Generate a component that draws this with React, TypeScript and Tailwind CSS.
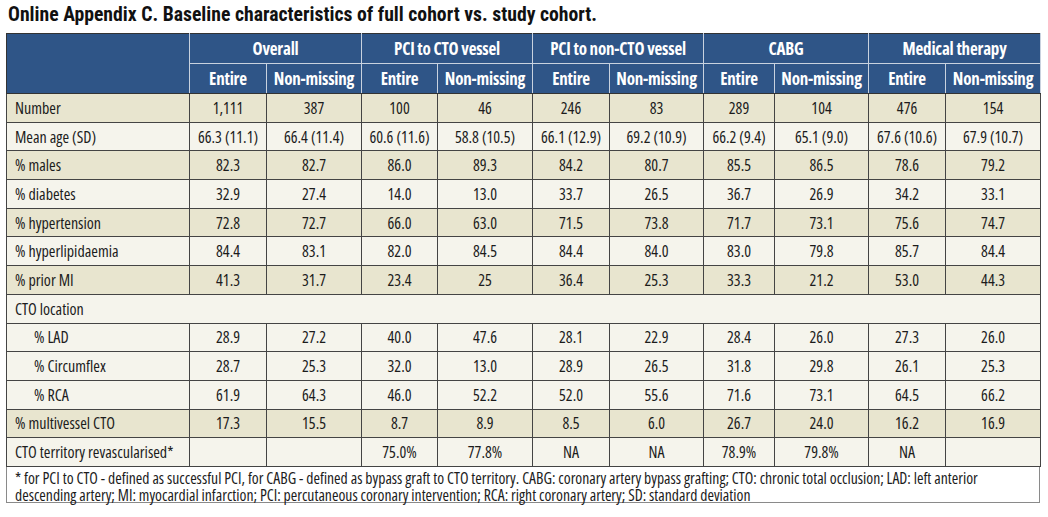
import React from "react";

type Row = { label: string; values: string[]; band: boolean; indent?: boolean; span?: boolean };

const rows: Row[] = [
  { label: "Number", values: ["1,111", "387", "100", "46", "246", "83", "289", "104", "476", "154"], band: true },
  { label: "Mean age (SD)", values: ["66.3 (11.1)", "66.4 (11.4)", "60.6 (11.6)", "58.8 (10.5)", "66.1 (12.9)", "69.2 (10.9)", "66.2 (9.4)", "65.1 (9.0)", "67.6 (10.6)", "67.9 (10.7)"], band: false },
  { label: "% males", values: ["82.3", "82.7", "86.0", "89.3", "84.2", "80.7", "85.5", "86.5", "78.6", "79.2"], band: true },
  { label: "% diabetes", values: ["32.9", "27.4", "14.0", "13.0", "33.7", "26.5", "36.7", "26.9", "34.2", "33.1"], band: false },
  { label: "% hypertension", values: ["72.8", "72.7", "66.0", "63.0", "71.5", "73.8", "71.7", "73.1", "75.6", "74.7"], band: true },
  { label: "% hyperlipidaemia", values: ["84.4", "83.1", "82.0", "84.5", "84.4", "84.0", "83.0", "79.8", "85.7", "84.4"], band: false },
  { label: "% prior MI", values: ["41.3", "31.7", "23.4", "25", "36.4", "25.3", "33.3", "21.2", "53.0", "44.3"], band: true },
  { label: "CTO location", values: [], band: false, span: true },
  { label: "% LAD", values: ["28.9", "27.2", "40.0", "47.6", "28.1", "22.9", "28.4", "26.0", "27.3", "26.0"], band: false, indent: true },
  { label: "% Circumflex", values: ["28.7", "25.3", "32.0", "13.0", "28.9", "26.5", "31.8", "29.8", "26.1", "25.3"], band: false, indent: true },
  { label: "% RCA", values: ["61.9", "64.3", "46.0", "52.2", "52.0", "55.6", "71.6", "73.1", "64.5", "66.2"], band: false, indent: true },
  { label: "% multivessel CTO", values: ["17.3", "15.5", "8.7", "8.9", "8.5", "6.0", "26.7", "24.0", "16.2", "16.9"], band: true },
  { label: "CTO territory revascularised*", values: ["", "", "75.0%", "77.8%", "NA", "NA", "78.9%", "79.8%", "NA", ""], band: false },
];

const groups = ["Overall", "PCI to CTO vessel", "PCI to non-CTO vessel", "CABG", "Medical therapy"];
const widths = [183, 77, 95, 76, 95, 77, 94, 71, 94, 77, 95];

export default function App() {
  return (
    <div className="w-[1048px] h-[517px] bg-white text-[#1c1c1c] font-['Open_Sans',sans-serif] [font-stretch:condensed]">
      {/* 제목 */}
      <div className="px-[8px] pt-[3px] h-[33px] text-[19.7px] font-bold leading-[24px] text-[#111] font-['Roboto',sans-serif]">
        Online Appendix C. Baseline characteristics of full cohort vs. study cohort.
      </div>

      <div className="ml-[6px] w-[1034px]">
        <table className="w-full table-fixed border-collapse text-[16px] leading-[18px]">
          <colgroup>
            {widths.map((w, i) => (
              <col key={i} style={{ width: w }} />
            ))}
          </colgroup>
          <thead>
            <tr className="h-[30px] bg-[#2f5587] text-white text-[17px]">
              <th rowSpan={2} className="border border-[#333] border-r-[#c9d2df]"></th>
              {groups.map((g) => (
                <th key={g} colSpan={2} className="border-t border-t-[#333] border-x border-x-[#c9d2df] border-b border-b-[#c9d2df] font-bold tracking-[-0.2px]">
                  {g}
                </th>
              ))}
            </tr>
            <tr className="h-[30px] bg-[#2f5587] text-white text-[17px]">
              {groups.map((g) => (
                <React.Fragment key={g}>
                  <th className="border-x border-x-[#c9d2df] border-b border-b-[#333] font-bold whitespace-nowrap tracking-[-0.2px]">Entire</th>
                  <th className="border-x border-x-[#c9d2df] border-b border-b-[#333] font-bold whitespace-nowrap tracking-[-0.2px]">Non-missing</th>
                </React.Fragment>
              ))}
            </tr>
          </thead>
          <tbody>
            {rows.map((r) => (
              <tr key={r.label} className={`h-[28.7px] ${r.band ? "bg-[#e8e5cf]" : "bg-[#f5f4ec]"}`}>
                {r.span ? (
                  <td colSpan={11} className="border border-[#444] px-[8px]">
                    {r.label}
                  </td>
                ) : (
                  <>
                    <td className={`border border-[#444] whitespace-nowrap ${r.indent ? "pl-[27px]" : "px-[8px]"}`}>{r.label}</td>
                    {r.values.map((v, i) => (
                      <td key={i} className="border border-[#444] text-center whitespace-nowrap">
                        {v}
                      </td>
                    ))}
                  </>
                )}
              </tr>
            ))}
          </tbody>
        </table>

        {/* 각주 */}
        <div className="border-x border-b border-[#8a8a8a] bg-white px-[8px] pt-[3px] h-[36px] text-[15.7px] leading-[17px]">
          * for PCI to CTO - defined as successful PCI, for CABG - defined as bypass graft to CTO territory. CABG: coronary artery bypass grafting; CTO: chronic total occlusion; LAD: left anterior descending artery; MI: myocardial infarction; PCI: percutaneous coronary intervention; RCA: right coronary artery; SD: standard deviation
        </div>
      </div>
    </div>
  );
}
